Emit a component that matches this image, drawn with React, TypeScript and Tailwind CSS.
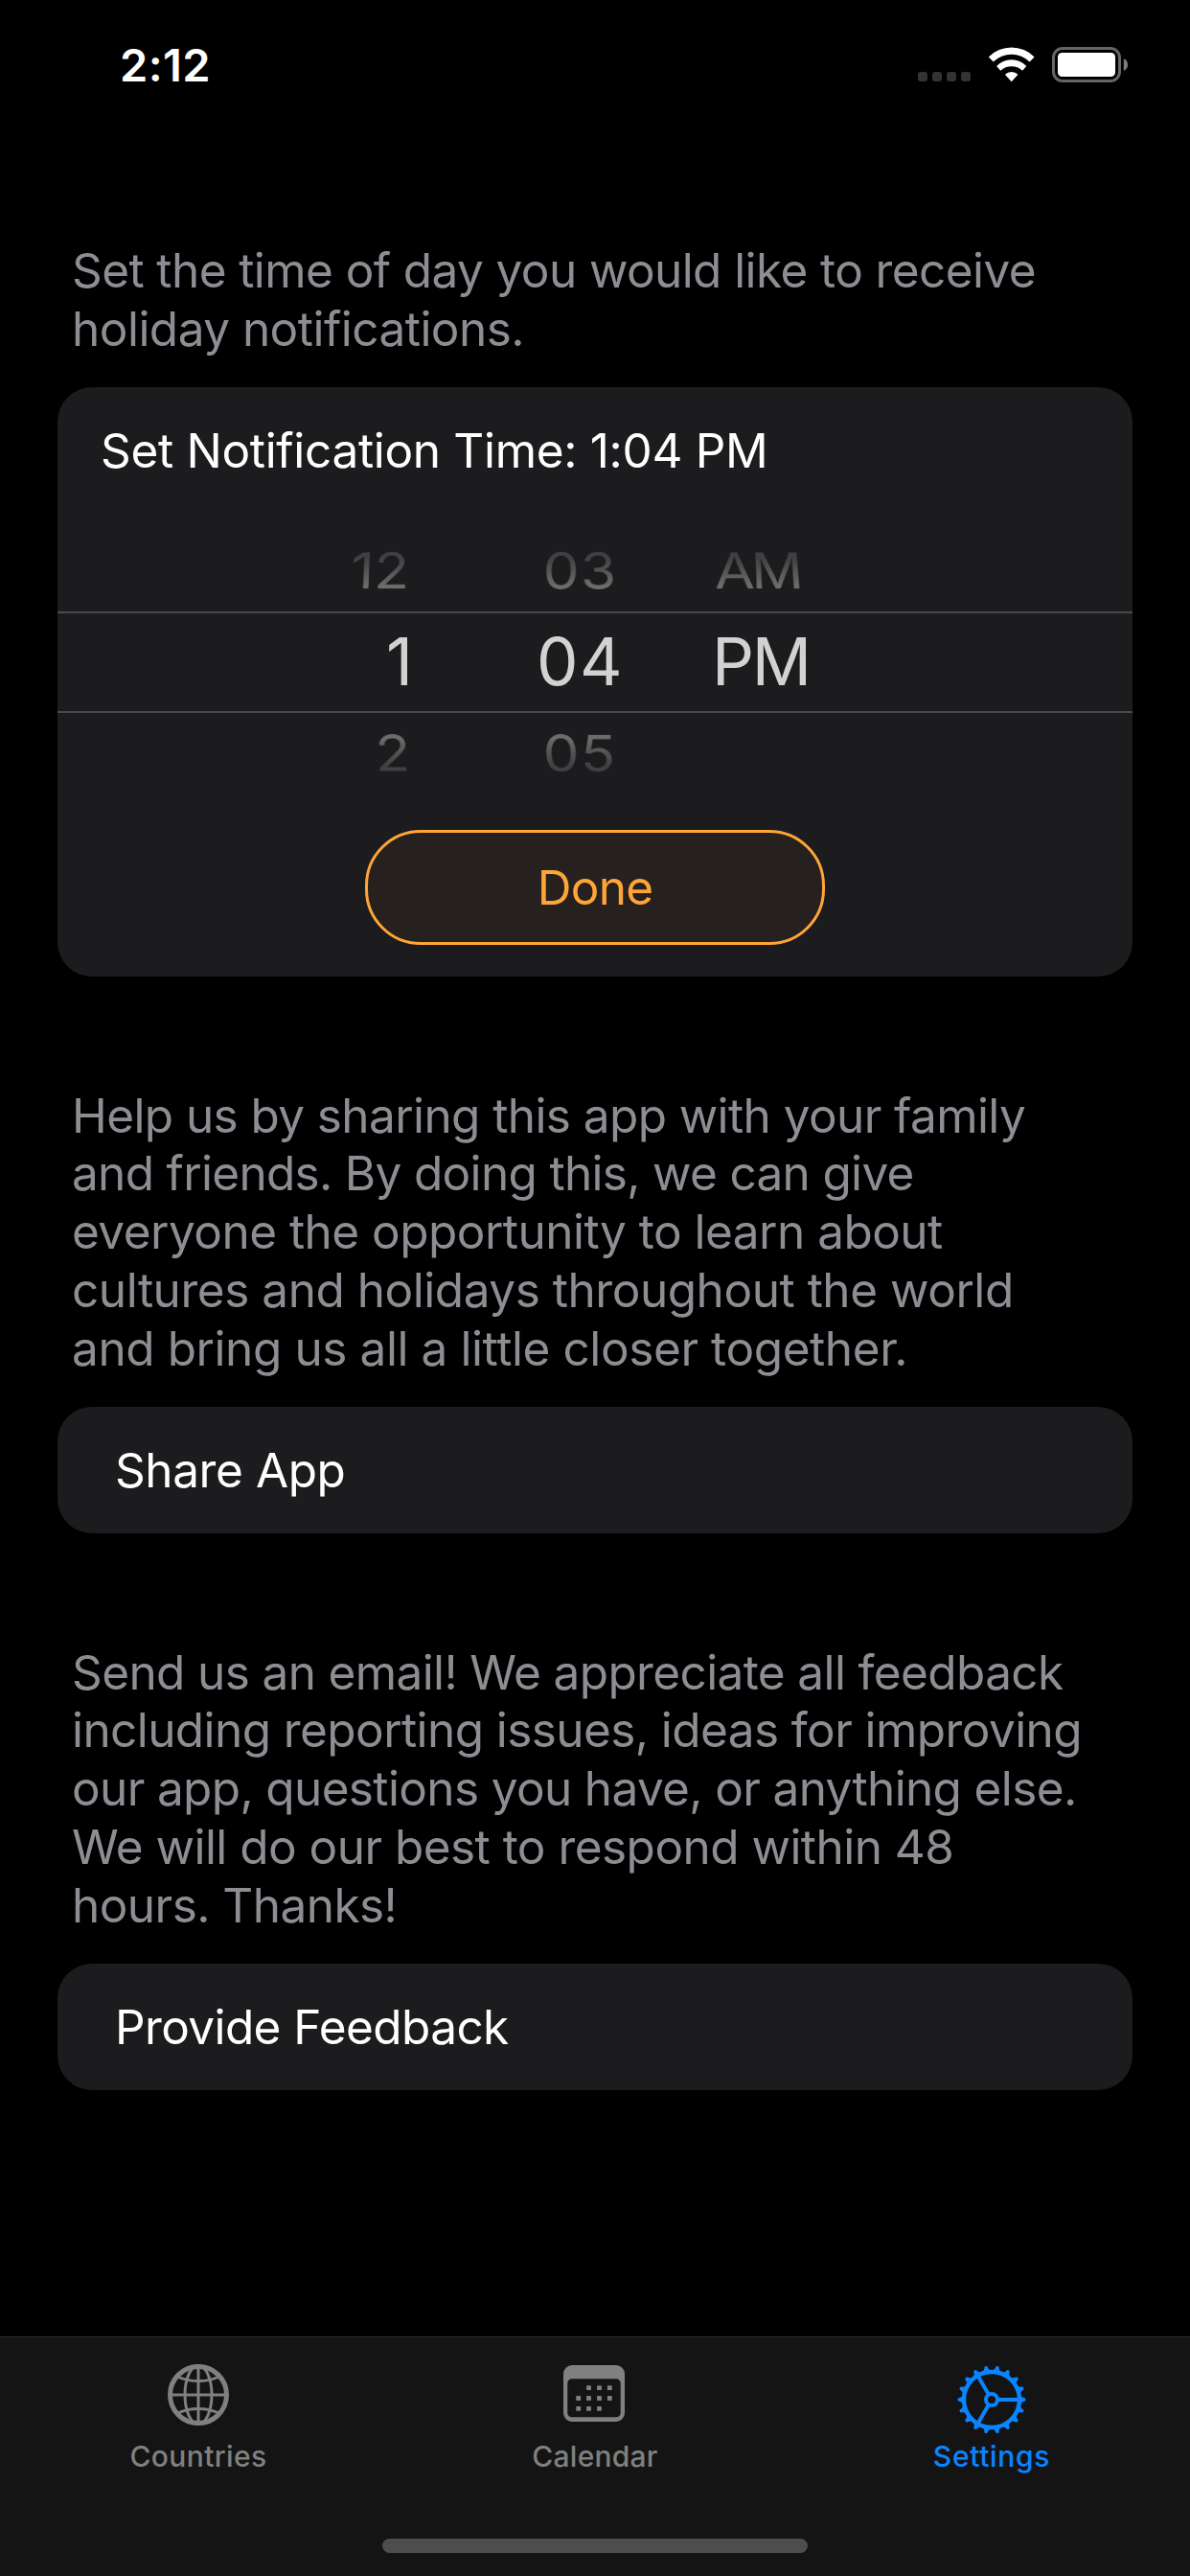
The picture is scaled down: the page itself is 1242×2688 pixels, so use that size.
import type { ReactNode } from "react";

type Line = [text: string, tracking: string];

const notificationLines: Line[] = [
  ["Set the time of day you would like to receive", "tracking-[-0.59px]"],
  ["holiday notifications.", "tracking-[-0.52px]"],
];

const shareLines: Line[] = [
  ["Help us by sharing this app with your family", "tracking-[-0.59px]"],
  ["and friends. By doing this, we can give", "tracking-[-0.68px]"],
  ["everyone the opportunity to learn about", "tracking-[-0.52px]"],
  ["cultures and holidays throughout the world", "tracking-[-0.46px]"],
  ["and bring us all a little closer together.", "tracking-[-0.41px]"],
];

const feedbackLines: Line[] = [
  ["Send us an email! We appreciate all feedback", "tracking-[-0.62px]"],
  ["including reporting issues, ideas for improving", "tracking-[-0.58px]"],
  ["our app, questions you have, or anything else.", "tracking-[-0.64px]"],
  ["We will do our best to respond within 48", "tracking-[-0.53px]"],
  ["hours. Thanks!", "tracking-[-0.55px]"],
];

function Caption({ lines }: { lines: Line[] }) {
  return (
    <p className="pb-[30px] pl-[15px] text-[49.5px] leading-[60.8px] text-[#8d8d93]">
      {lines.map(([text, tracking]) => (
        <span key={text} className={`block whitespace-nowrap ${tracking}`}>
          {text}
        </span>
      ))}
    </p>
  );
}

function StatusBar() {
  return (
    <header className="flex h-[135px] items-center justify-between pr-[65px] pl-[125px]">
      <time className="text-[47px] leading-none font-semibold tracking-[0.38px]">2:12</time>
      <div className="flex h-[37px] items-end gap-[18px]">
        <div className="flex gap-[5px] pb-px">
          {[0, 1, 2, 3].map((i) => (
            <span key={i} className="size-[10px] rounded-[3px] bg-[#333333]" />
          ))}
        </div>
        <svg width="49" height="37" viewBox="0 0 49 37" fill="#fff" aria-label="Wi-Fi">
          <path d="M0.8 10.4A33.6 33.6 0 0 1 48.6 10.4L43.6 15.6A26.8 26.8 0 0 0 5.8 15.6Z" />
          <path d="M9.1 19.9A21.5 21.5 0 0 1 40.3 19.9L36.1 24.7A17 17 0 0 0 13.3 24.7Z" />
          <path d="M17.9 28.7A10 10 0 0 1 31.5 28.7L24.7 36.2Z" />
        </svg>
        <svg width="79" height="37" viewBox="0 0 79 37" aria-label="Battery">
          <rect x="1.5" y="1.5" width="69" height="34" rx="9.5" fill="none" stroke="#666" strokeWidth="3" />
          <rect x="6" y="6" width="60" height="25" rx="4.5" fill="#fff" />
          <path d="M74.8 12.2C77.6 13.4 79 15.6 79 18.6S77.6 23.8 74.8 25Z" fill="#7f7f7f" />
        </svg>
      </div>
    </header>
  );
}

const above =
  "inline-block bg-linear-to-b from-[#404042] from-30% to-[#6c6c6c] to-75% bg-clip-text text-transparent [transform:perspective(620px)_rotateX(30deg)_scale(0.87)]";
const below =
  "inline-block bg-linear-to-b from-[#6c6c6c] from-25% to-[#404042] to-70% bg-clip-text text-transparent [transform:perspective(620px)_rotateX(-30deg)_scale(0.87)]";

interface PickerRowProps {
  className: string;
  item: string;
  values: [hour: string, minute: string, period: string];
  hourClass: string;
  periodClass: string;
}

function PickerRow({ className, item, values, hourClass, periodClass }: PickerRowProps) {
  const [hour, minute, period] = values;
  return (
    <div
      className={`grid grid-cols-[408px_258px_auto] items-center text-[69px] leading-[84px] ${className}`}
    >
      <div className={`text-right ${hourClass}`}>
        <span className={`origin-right ${item}`}>{hour}</span>
      </div>
      <div className="pl-[17px] text-center tracking-[1.4px]">
        <span className={`origin-center ${item}`}>{minute}</span>
      </div>
      <div className={periodClass}>
        <span className={`origin-left ${item}`}>{period}</span>
      </div>
    </div>
  );
}

function TimePicker() {
  return (
    <div className="pt-[17px]">
      <PickerRow
        className="h-[85px]"
        item={above}
        values={["12", "03", "AM"]}
        hourClass="pr-[41px]"
        periodClass="pl-[20px] tracking-[-4px]"
      />
      <PickerRow
        className="h-[106px] border-y-2 border-[#4a4a4c] pb-[2px] text-[#d2d2d2]"
        item="inline-block"
        values={["1", "04", "PM"]}
        hourClass="pr-[37px]"
        periodClass="pl-[17px] tracking-[-2.4px]"
      />
      <PickerRow
        className="h-[79px]"
        item={below}
        values={["2", "05", ""]}
        hourClass="pr-[40px]"
        periodClass="pl-[20px]"
      />
    </div>
  );
}

function ActionCard({ children }: { children: ReactNode }) {
  return (
    <button className="flex h-[132px] w-full items-center rounded-[36px] bg-[#1c1c1e] pt-[2px] pl-[60px] text-[49.5px] leading-[61px]">
      {children}
    </button>
  );
}

function GlobeIcon() {
  return (
    <svg width="80" height="80" viewBox="0 0 80 80" fill="none" stroke="currentColor" strokeWidth="3">
      <circle cx="40" cy="36" r="29.5" strokeWidth="5" />
      <path d="M40 6v60M10 36h60" />
      <ellipse cx="40" cy="36" rx="14" ry="30.5" />
      <path d="M18.5 17Q28 21.6 40 21.6T61.5 17M18.5 55Q28 50.4 40 50.4T61.5 55" />
    </svg>
  );
}

function CalendarIcon() {
  const dots = [
    [33.5, 28.7], [44.5, 28.7], [55.3, 28.7],
    [22.7, 39.5], [33.5, 39.5], [44.5, 39.5], [55.3, 39.5],
    [22.7, 50.3], [33.5, 50.3], [44.5, 50.3],
  ];
  return (
    <svg width="80" height="80" viewBox="0 0 80 80" fill="currentColor">
      <path
        fillRule="evenodd"
        d="M16 5H62A9 9 0 0 1 71 14V55A9 9 0 0 1 62 64H16A9 9 0 0 1 7 55V14A9 9 0 0 1 16 5ZM15.8 19.3A4.5 4.5 0 0 0 11.3 23.8V54.8A4.5 4.5 0 0 0 15.8 59.3H62.2A4.5 4.5 0 0 0 66.7 54.8V23.8A4.5 4.5 0 0 0 62.2 19.3Z"
      />
      {dots.map(([x, y]) => (
        <rect key={`${x}-${y}`} x={x - 2.4} y={y - 2.4} width="4.8" height="4.8" rx="0.7" />
      ))}
    </svg>
  );
}

function GearIcon() {
  return (
    <svg width="80" height="80" viewBox="0 0 80 80" fill="none" stroke="currentColor">
      <circle cx="40" cy="41" r="29" strokeWidth="4.4" />
      <circle cx="40" cy="41" r="6" strokeWidth="4" />
      {[0, 120, 240].map((a) => (
        <path key={a} d="M47 41H69" strokeWidth="4" transform={`rotate(${a} 40 41)`} />
      ))}
      {Array.from({ length: 18 }, (_, i) => (
        <path
          key={i}
          d="M70 36.6C71.4 38.6 73.4 39.1 75 39.5Q76.2 41 75 42.5C73.4 42.9 71.4 43.4 70 45.4Z"
          fill="currentColor"
          stroke="none"
          transform={`rotate(${i * 20} 40 41)`}
        />
      ))}
    </svg>
  );
}

function Tab({ icon, label, className }: { icon: ReactNode; label: string; className: string }) {
  return (
    <div className={`flex flex-col items-center text-[30px] leading-[36px] font-medium ${className}`}>
      {icon}
      <span className="mt-[2px]">{label}</span>
    </div>
  );
}

export default function App() {
  return (
    <div className="flex h-[2688px] w-[1242px] flex-col overflow-hidden bg-black font-[Inter,sans-serif] text-white">
      <StatusBar />

      <main className="flex-1 px-[60px] pt-[117px]">
        <Caption lines={notificationLines} />
        <section className="h-[615px] rounded-[36px] bg-[#1c1c1e]">
          <h1 className="flex h-[132px] items-center pt-[2px] pl-[45px] text-[49.5px] leading-[61px] tracking-[-0.32px]">
            Set Notification Time: 1:04 PM
          </h1>
          <TimePicker />
          <button className="mx-auto mt-[43px] flex h-[120px] w-[480px] items-center justify-center rounded-[58px] border-3 border-[#ffa536] bg-[#26211f] pt-[2px] text-[49.5px] tracking-[-0.7px] text-[#ffa536]">
            Done
          </button>
        </section>

        <div className="mt-[115px]">
          <Caption lines={shareLines} />
          <ActionCard>
            <span className="tracking-[-0.41px]">Share App</span>
          </ActionCard>
        </div>

        <div className="mt-[115px]">
          <Caption lines={feedbackLines} />
          <ActionCard>
            <span className="tracking-[-0.61px]">Provide Feedback</span>
          </ActionCard>
        </div>
      </main>

      <nav className="flex h-[250px] shrink-0 flex-col border-t border-[#2f2f2f] bg-[#141414] pt-[24px]">
        <div className="grid grid-cols-3 text-[#808080]">
          <Tab icon={<GlobeIcon />} label="Countries" className="tracking-[0.36px]" />
          <Tab icon={<CalendarIcon />} label="Calendar" className="tracking-[0.24px]" />
          <Tab icon={<GearIcon />} label="Settings" className="tracking-[0.67px] text-[#0a84ff]" />
        </div>
        <div className="mx-auto mt-auto mb-[24px] h-[15px] w-[444px] rounded-full bg-[#4d4d4d]" />
      </nav>
    </div>
  );
}
